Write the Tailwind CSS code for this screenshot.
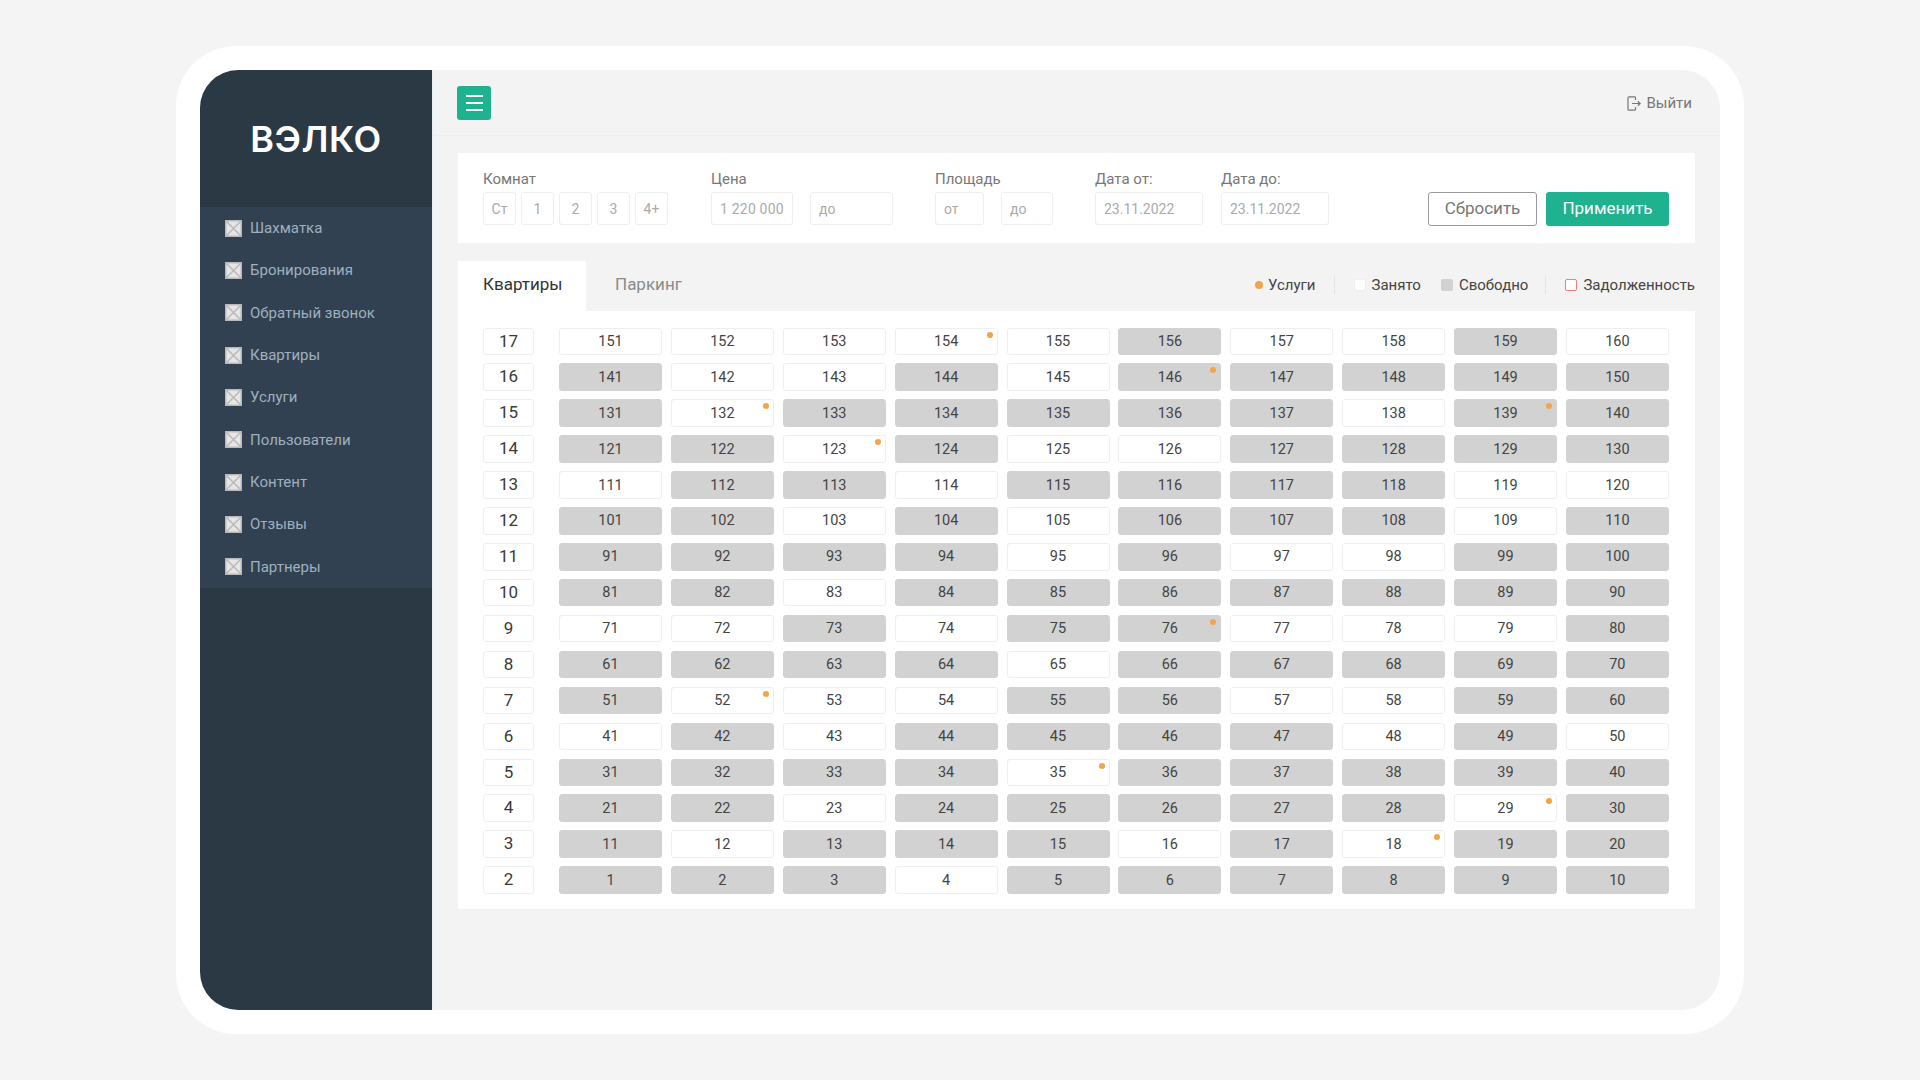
<!DOCTYPE html>
<html lang="ru">
<head>
<meta charset="utf-8">
<title>ВЭЛКО</title>
<script src="https://cdn.jsdelivr.net/npm/@tailwindcss/browser@4"></script>
</head>
<body class="bg-[#f4f4f4] font-['Roboto',sans-serif] overflow-hidden">
<div class="w-[1920px] h-[1080px] pt-[46px] pl-[176px]">
  <div class="w-[1568px] h-[988px] bg-white rounded-[60px] p-[24px]">
    <div class="h-[940px] rounded-[38px] overflow-hidden flex bg-[#f3f3f3]">
      <aside class="w-[233px] shrink-0 bg-[#2b3945] border-r border-[#e6edf3]">
        <div class="h-[137px] flex items-center justify-center">
          <span class="font-['Inter',sans-serif] font-semibold text-[36px] leading-none text-white tracking-[0.5px]">ВЭЛКО</span>
        </div>
        <nav id="nav" class="bg-[#314152]"></nav>
      </aside>
      <main class="flex-1 pl-[25px] pr-[25px] relative">
        <div class="absolute left-0 right-0 top-[65px] h-[1px] bg-[#eeeeee]"></div>
        <div class="h-[65px] flex items-center justify-between -ml-[1px] pt-[1px]">
          <button class="w-[34px] h-[34px] rounded-[3px] bg-[#1eb28e] flex flex-col items-center justify-center gap-[5px]">
            <span class="block w-[17px] h-[2px] bg-white"></span>
            <span class="block w-[17px] h-[2px] bg-white"></span>
            <span class="block w-[17px] h-[2px] bg-white"></span>
          </button>
          <div class="flex items-center gap-[5px] text-[15px] leading-none text-[#777777] mr-[3px] mt-[1px]">
            <svg width="14" height="15" viewBox="0 0 14 15" fill="none" stroke="#777777" stroke-width="1.2"><path d="M8.5 4V1.6A1 1 0 0 0 7.5 .8H2A1 1 0 0 0 1 1.8v11.4a1 1 0 0 0 1 1h5.5a1 1 0 0 0 1-1V11"/><path d="M5 7.5h8M10.8 5.2l2.4 2.3-2.4 2.3"/></svg>
            <span>Выйти</span>
          </div>
        </div>

        <section class="mt-[18px] h-[90px] bg-white pl-[25px] pr-[26px] pt-[18px] flex">
          <div class="w-[185px]">
            <div class="h-[16px] mb-[5px] text-[15px] leading-[16px] text-[#777777]">Комнат</div>
            <div class="flex gap-[5px] text-[14px] text-[#aaaaaa]">
              <div class="w-[33px] h-[33px] pt-[1px] border border-[#eeeeee] rounded-[3px] flex items-center justify-center">Ст</div>
              <div class="w-[33px] h-[33px] pt-[1px] border border-[#eeeeee] rounded-[3px] flex items-center justify-center">1</div>
              <div class="w-[33px] h-[33px] pt-[1px] border border-[#eeeeee] rounded-[3px] flex items-center justify-center">2</div>
              <div class="w-[33px] h-[33px] pt-[1px] border border-[#eeeeee] rounded-[3px] flex items-center justify-center">3</div>
              <div class="w-[33px] h-[33px] pt-[1px] border border-[#eeeeee] rounded-[3px] flex items-center justify-center">4+</div>
            </div>
          </div>
          <div class="ml-[43px] w-[182px]">
            <div class="h-[16px] mb-[5px] text-[15px] leading-[16px] text-[#777777]">Цена</div>
            <div class="flex gap-[17px] text-[14px] text-[#aaaaaa]">
              <div class="w-[82px] h-[33px] pt-[1px] border border-[#eeeeee] rounded-[3px] flex items-center pl-[8px] whitespace-nowrap tracking-[0.2px]">1 220 000</div>
              <div class="w-[83px] h-[33px] pt-[1px] border border-[#eeeeee] rounded-[3px] flex items-center pl-[8px]">до</div>
            </div>
          </div>
          <div class="ml-[42px] w-[118px]">
            <div class="h-[16px] mb-[5px] text-[15px] leading-[16px] text-[#777777]">Площадь</div>
            <div class="flex gap-[17px] text-[14px] text-[#aaaaaa]">
              <div class="w-[49px] h-[33px] pt-[1px] border border-[#eeeeee] rounded-[3px] flex items-center pl-[8px]">от</div>
              <div class="w-[52px] h-[33px] pt-[1px] border border-[#eeeeee] rounded-[3px] flex items-center pl-[8px]">до</div>
            </div>
          </div>
          <div class="ml-[42px] w-[108px]">
            <div class="h-[16px] mb-[5px] text-[15px] leading-[16px] text-[#777777]">Дата от:</div>
            <div class="w-[108px] h-[33px] pt-[1px] border border-[#eeeeee] rounded-[3px] flex items-center pl-[8px] text-[14px] text-[#aaaaaa]">23.11.2022</div>
          </div>
          <div class="ml-[18px] w-[108px]">
            <div class="h-[16px] mb-[5px] text-[15px] leading-[16px] text-[#777777]">Дата до:</div>
            <div class="w-[108px] h-[33px] pt-[1px] border border-[#eeeeee] rounded-[3px] flex items-center pl-[8px] text-[14px] text-[#aaaaaa]">23.11.2022</div>
          </div>
          <div class="ml-auto mt-[21px] flex gap-[9px] h-[34px] text-[17px]">
            <button class="w-[109px] border border-[#9a9a9a] rounded-[3px] text-[#777777]">Сбросить</button>
            <button class="w-[123px] rounded-[3px] bg-[#1eb28e] text-white">Применить</button>
          </div>
        </section>

        <div class="mt-[18px] h-[50px] flex items-center justify-between">
          <div class="flex h-full text-[17px]">
            <div class="w-[128px] bg-white pl-[25px] flex items-center text-[#333333] pb-[2px]">Квартиры</div>
            <div class="pl-[29px] flex items-center text-[#8a8a8a] pb-[2px]">Паркинг</div>
          </div>
          <div class="flex items-center text-[15px] text-[#444444] pb-[2px] whitespace-nowrap">
            <span class="w-[8px] h-[8px] rounded-full bg-[#f5a347] mr-[5px]"></span><span>Услуги</span>
            <span class="w-[1px] h-[18px] bg-[#e4e4e4] ml-[18px] mr-[19px]"></span>
            <span class="w-[12px] h-[12px] rounded-[2px] bg-white border border-[#eeeeee] mr-[6px]"></span><span>Занято</span>
            <span class="w-[12px] h-[12px] rounded-[2px] bg-[#d2d2d2] ml-[20px] mr-[6px]"></span><span>Свободно</span>
            <span class="w-[1px] h-[18px] bg-[#e4e4e4] ml-[17px] mr-[19px]"></span>
            <span class="w-[12px] h-[12px] rounded-[2px] bg-white border border-[#ef7f7f] mr-[6px]"></span><span>Задолженность</span>
          </div>
        </div>

        <section class="h-[599px] bg-white pl-[25px] pt-[16.5px] flex border-b border-[#f0f0f0]">
          <div id="floors" class="w-[51px] mr-[25px] flex flex-col gap-y-[8.43px]"></div>
          <div id="cells" class="grid grid-cols-[repeat(10,103px)] auto-rows-[27.5px] gap-x-[8.89px] gap-y-[8.43px]"></div>
        </section>
      </main>
    </div>
  </div>
</div>
<script>
const navItems = ['Шахматка','Бронирования','Обратный звонок','Квартиры','Услуги','Пользователи','Контент','Отзывы','Партнеры'];
document.getElementById('nav').innerHTML = navItems.map(t => `<a class="h-[42.33px] flex items-center pl-[25px] gap-[8px] text-[15px] text-[#9fb0bf]"><svg width="17" height="17" viewBox="0 0 17 17" fill="#e6e6e6" stroke="#b9b9b9" stroke-width="1.5"><rect x=".75" y=".75" width="15.5" height="15.5"/><path d="M1 1l15 15M16 1L1 16"/></svg><span>${t}</span></a>`).join('');
const floorCls = 'h-[27.5px] border border-[#eeeeee] rounded-[3px] flex items-center justify-center text-[17px] text-[#3a3a3a] bg-white';
let floors = '';
for (let f = 17; f >= 2; f--) floors += `<div class="${floorCls}">${f}</div>`;
document.getElementById('floors').innerHTML = floors;
const white = new Set([151,152,153,154,155,157,158,160,142,143,145,132,138,123,125,126,111,114,119,120,103,105,109,95,97,98,83,71,72,74,77,78,79,65,52,53,54,57,58,41,43,48,50,35,23,29,12,16,18,4]);
const dots = new Set([154,146,132,139,123,76,52,35,29,18]);
const whiteCls = 'relative pt-[1px] rounded-[3px] flex items-center justify-center text-[14.5px] text-[#444444] bg-white border border-[#eeeeee]';
const greyCls = 'relative pt-[1px] rounded-[3px] flex items-center justify-center text-[14.5px] text-[#444444] bg-[#d2d2d2] border border-[#d2d2d2]';
const dotEl = '<span class="absolute right-[4px] top-[3px] w-[6px] h-[6px] rounded-full bg-[#f5a347]"></span>';
let cells = '';
for (let r = 15; r >= 0; r--) for (let c = 1; c <= 10; c++) {
  const n = r * 10 + c;
  cells += `<div class="${white.has(n) ? whiteCls : greyCls}">${n}${dots.has(n) ? dotEl : ''}</div>`;
}
document.getElementById('cells').innerHTML = cells;
</script>
</body>
</html>
